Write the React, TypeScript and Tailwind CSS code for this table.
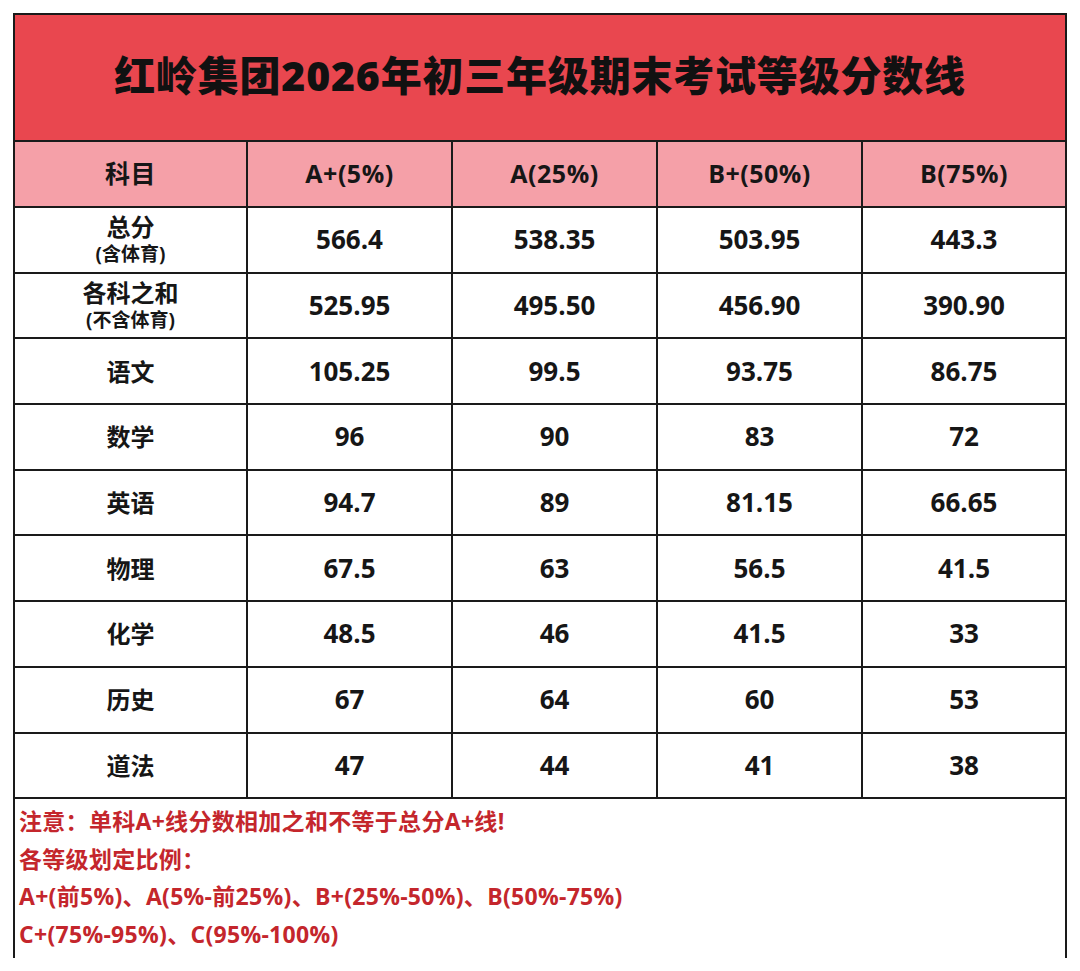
const rows: { label: string; sub?: string; values: string[] }[] = [
  { label: "总分", sub: "(含体育)", values: ["566.4", "538.35", "503.95", "443.3"] },
  { label: "各科之和", sub: "(不含体育)", values: ["525.95", "495.50", "456.90", "390.90"] },
  { label: "语文", values: ["105.25", "99.5", "93.75", "86.75"] },
  { label: "数学", values: ["96", "90", "83", "72"] },
  { label: "英语", values: ["94.7", "89", "81.15", "66.65"] },
  { label: "物理", values: ["67.5", "63", "56.5", "41.5"] },
  { label: "化学", values: ["48.5", "46", "41.5", "33"] },
  { label: "历史", values: ["67", "64", "60", "53"] },
  { label: "道法", values: ["47", "44", "41", "38"] },
];

const headers = ["科目", "A+(5%)", "A(25%)", "B+(50%)", "B(75%)"];

const notes = [
  "注意：单科A+线分数相加之和不等于总分A+线!",
  "各等级划定比例：",
  "A+(前5%)、A(5%-前25%)、B+(25%-50%)、B(50%-75%)",
  "C+(75%-95%)、C(95%-100%)",
];

const font = "font-['Open_Sans','Noto_Sans_CJK_SC',sans-serif]";

export default function App() {
  return (
    <div className={`w-[1080px] h-[971px] bg-white pt-[13px] pl-[13px] ${font}`}>
      <div className="w-[1054px] h-[945px] border-2 border-b-0 border-[#1a1a1a] flex flex-col">
        <div className="h-[127px] bg-[#e9474f] flex items-center justify-center border-b-2 border-[#1a1a1a]">
          <h1 className="text-[41px] font-black text-[#111] tracking-[0.8px] pb-[4px]">
            红岭集团2026年初三年级期末考试等级分数线
          </h1>
        </div>
        <div className="grid grid-cols-[233px_205px_205px_205px_1fr] h-[66px] bg-[#f5a0a8] border-b-2 border-[#1a1a1a]">
          {headers.map((h, i) => (
            <div
              key={h}
              className={`flex items-center justify-center text-[25px] font-bold text-[#161616] tracking-[0.5px] ${
                i < 4 ? "border-r-2 border-[#1a1a1a]" : ""
              }`}
            >
              {h}
            </div>
          ))}
        </div>
        {rows.map((r) => (
          <div
            key={r.label}
            className="grid grid-cols-[233px_205px_205px_205px_1fr] h-[65.7px] border-b-2 border-[#1a1a1a]"
          >
            <div className="flex flex-col items-center justify-center gap-[3px] border-r-2 border-[#1a1a1a] text-[#161616]">
              <span className="text-[24px] font-bold leading-[27px]">{r.label}</span>
              {r.sub && <span className="text-[19px] font-bold leading-[23px]">{r.sub}</span>}
            </div>
            {r.values.map((v, i) => (
              <div
                key={i}
                className={`flex items-center justify-center text-[26px] font-bold text-[#161616] ${
                  i < 3 ? "border-r-2 border-[#1a1a1a]" : ""
                }`}
              >
                {v}
              </div>
            ))}
          </div>
        ))}
        <div className="flex-1 px-[4px] pt-[4px] flex flex-col">
          {notes.map((n) => (
            <p key={n} className="text-[23px] font-bold text-[#c4262c] leading-[37.5px] tracking-[0.3px]">
              {n}
            </p>
          ))}
        </div>
      </div>
    </div>
  );
}
